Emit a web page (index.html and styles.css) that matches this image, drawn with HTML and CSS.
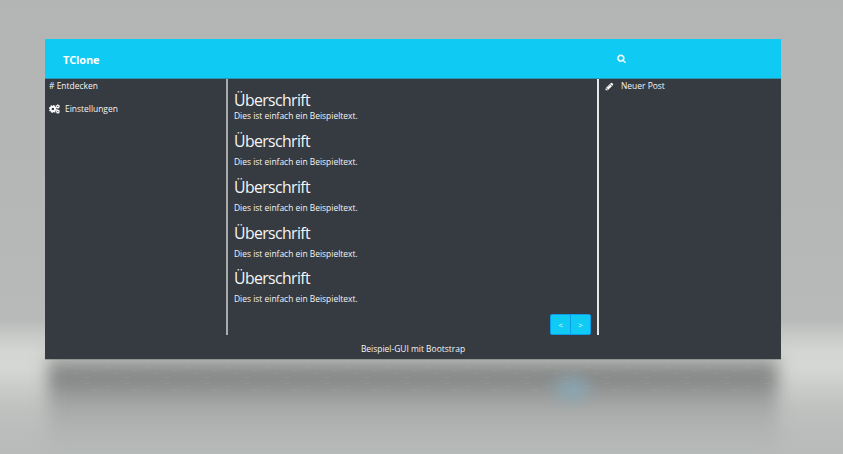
FILE: index.html
```html
<!DOCTYPE html>
<html lang="de">
<head>
<meta charset="utf-8">
<title>TClone</title>
<link rel="stylesheet" href="styles.css">
</head>
<body>
<div class="shadow"></div>
<div class="glow"></div>
<svg class="floor" viewBox="0 0 843 40">
  <defs>
    <pattern id="marks" width="40" height="20" patternUnits="userSpaceOnUse">
      <path d="M5 2.5h5M25 5.5h5M12 9.5h6M34 12.5h5M3 16.5h6" stroke="#c2c4c2" stroke-opacity=".11"/>
    </pattern>
  </defs>
  <rect width="843" height="30" fill="url(#marks)"/>
</svg>
<div class="window">
  <header class="topbar">
    <div class="brand">TClone</div>
    <svg class="search" viewBox="0 0 1792 1792"><path d="M1216 832q0-185-131.5-316.5t-316.5-131.5-316.5 131.5-131.5 316.5 131.5 316.5 316.5 131.5 316.5-131.5 131.5-316.5zm512 832q0 52-38 90t-90 38q-54 0-90-38l-343-342q-179 124-399 124-143 0-273.5-55.5t-225-150-150-225-55.5-273.5 55.5-273.5 150-225 225-150 273.5-55.5 273.5 55.5 225 150 150 225 55.5 273.5q0 220-124 399l343 343q37 37 37 90z"/></svg>
  </header>
  <main class="columns">
    <nav class="left">
      <a class="item"><span># Entdecken</span></a>
      <a class="item">
        <svg class="cogs" viewBox="0 0 20 18">
          <g fill="none" stroke="#fff">
            <circle cx="7" cy="9" r="4" stroke-width="3.4"/>
            <circle cx="7" cy="9" r="6.2" stroke-width="2" stroke-dasharray="2.6 2.27"/>
            <circle cx="16" cy="4.3" r="2.2" stroke-width="2"/>
            <circle cx="16" cy="4.3" r="3.5" stroke-width="1.2" stroke-dasharray="1.6 1.15"/>
            <circle cx="16" cy="13.7" r="2.2" stroke-width="2"/>
            <circle cx="16" cy="13.7" r="3.5" stroke-width="1.2" stroke-dasharray="1.6 1.15"/>
          </g>
        </svg>
        <span>Einstellungen</span></a>
    </nav>
    <section class="feed">
      <article class="post first"><h2>Überschrift</h2><p>Dies ist einfach ein Beispieltext.</p></article>
      <article class="post"><h2>Überschrift</h2><p>Dies ist einfach ein Beispieltext.</p></article>
      <article class="post"><h2>Überschrift</h2><p>Dies ist einfach ein Beispieltext.</p></article>
      <article class="post"><h2>Überschrift</h2><p>Dies ist einfach ein Beispieltext.</p></article>
      <article class="post"><h2>Überschrift</h2><p>Dies ist einfach ein Beispieltext.</p></article>
      <div class="pager"><button>&lt;</button><button>&gt;</button></div>
    </section>
    <aside class="right">
      <a class="item">
        <svg class="pencil" viewBox="0 0 1792 1792"><path d="M491 1536l91-91-235-235-91 91v107h128v128h107zm523-928q0-22-22-22-10 0-17 7l-542 542q-7 7-7 17 0 22 22 22 10 0 17-7l542-542q7-7 7-17zm-54-192l416 416-832 832h-416v-416zm683 96q0 53-37 90l-166 166-416-416 166-165q36-38 90-38 53 0 91 38l235 234q37 39 37 91z"/></svg>
        <span>Neuer Post</span></a>
    </aside>
  </main>
  <footer class="footer"><span>Beispiel-GUI mit Bootstrap</span></footer>
</div>
</body>
</html>
```
FILE: styles.css
```css
* { box-sizing: border-box; }
body {
  margin: 0;
  width: 843px;
  height: 454px;
  overflow: hidden;
  position: relative;
  padding: 39px 62px 0 45px;
  font-family: "Open Sans", "Noto Sans", sans-serif;
  font-size: 8.45px;
  color: #f4f5f5;
  background: linear-gradient(#b3b5b4 0, #b5b7b6 180px, #b8bab9 320px, #c8cac8 336px, #d4d6d3 352px, #d5d7d4 368px, #cbcdca 386px, #bfc1bf 410px, #b9bcbb 435px, #b8bbba 454px);
}
/* floor reflection of the window */
.shadow {
  position: absolute;
  left: 48px;
  top: 352px;
  width: 730px;
  height: 106px;
  filter: blur(8px);
  background: linear-gradient(#b8bab8 0, #b0b2b0 8px, #898b8a 17px, #828483 26px, #999b9a 42px, #a8aaa9 56px, #b1b3b2 76px, rgba(183,186,185,0) 106px);
}
.glow {
  position: absolute;
  left: 542px;
  top: 365px;
  width: 60px;
  height: 48px;
  background: radial-gradient(closest-side, rgba(135,170,185,.7), rgba(135,170,185,.5) 35%, rgba(135,170,185,.15) 70%, rgba(135,170,185,0));
}
/* faint texture of the floor */
.floor { position: absolute; left: 0; top: 361px; width: 843px; height: 40px; }
.window {
  position: relative;
  display: flex;
  flex-direction: column;
  width: 736px;
  height: 320px;
  background: #363a41;
  box-shadow: 0 1px 0 rgba(120,122,122,.5);
}
.topbar {
  display: flex;
  align-items: center;
  height: 40px;
  padding-left: 18px;
  background: #0fcbf3;
  border-bottom: 1px solid #2695ad;
}
.brand { width: 554px; font-size: 11px; line-height: 15px; font-weight: 700; padding-top: 2px; letter-spacing: -.15px; color: #fff; }
.search { width: 9px; height: 9px; margin-top: -1px; fill: #fff; stroke: #fff; stroke-width: 60; }
.columns { display: flex; height: 256px; }
.left { width: 181px; padding: 1px 0 0 4px; }
.feed {
  width: 373px;
  padding: 12px 6px 0 6px;
  border-left: 2px solid #a9abac;
  border-right: 2px solid #e8e8e8;
}
.right { flex: 1; padding: 1px 0 0 6px; }
.item { display: flex; align-items: center; height: 12px; line-height: 12px; margin-bottom: 10.5px; white-space: nowrap; }
.cogs { width: 11px; height: 10px; margin-right: 5px; }
.pencil { width: 9px; height: 9px; fill: #fff; margin-right: 7px; }
.post { height: 45.7px; }
.post h2 { margin: 0; font-size: 15.8px; line-height: 18px; font-weight: 400; letter-spacing: -.6px; }
.post p { margin: 6px 0 0; line-height: 12px; }
.post.first { height: 41.3px; }
.post.first p { margin-top: 1px; }
.pager { display: flex; justify-content: flex-end; height: 21px; margin-top: -1px; }
.pager button {
  width: 21px;
  height: 21px;
  padding: 0;
  border: 1px solid #0b9cec;
  background: #0fcbf3;
  color: #e5f9fd;
  font: 8px "Open Sans", sans-serif;
}
.pager button:first-child { border-radius: 2px 0 0 2px; }
.pager button:last-child { border-radius: 0 2px 2px 0; margin-left: -1px; }
.footer { flex: 1; text-align: center; line-height: 12px; padding-top: 8px; }
```
